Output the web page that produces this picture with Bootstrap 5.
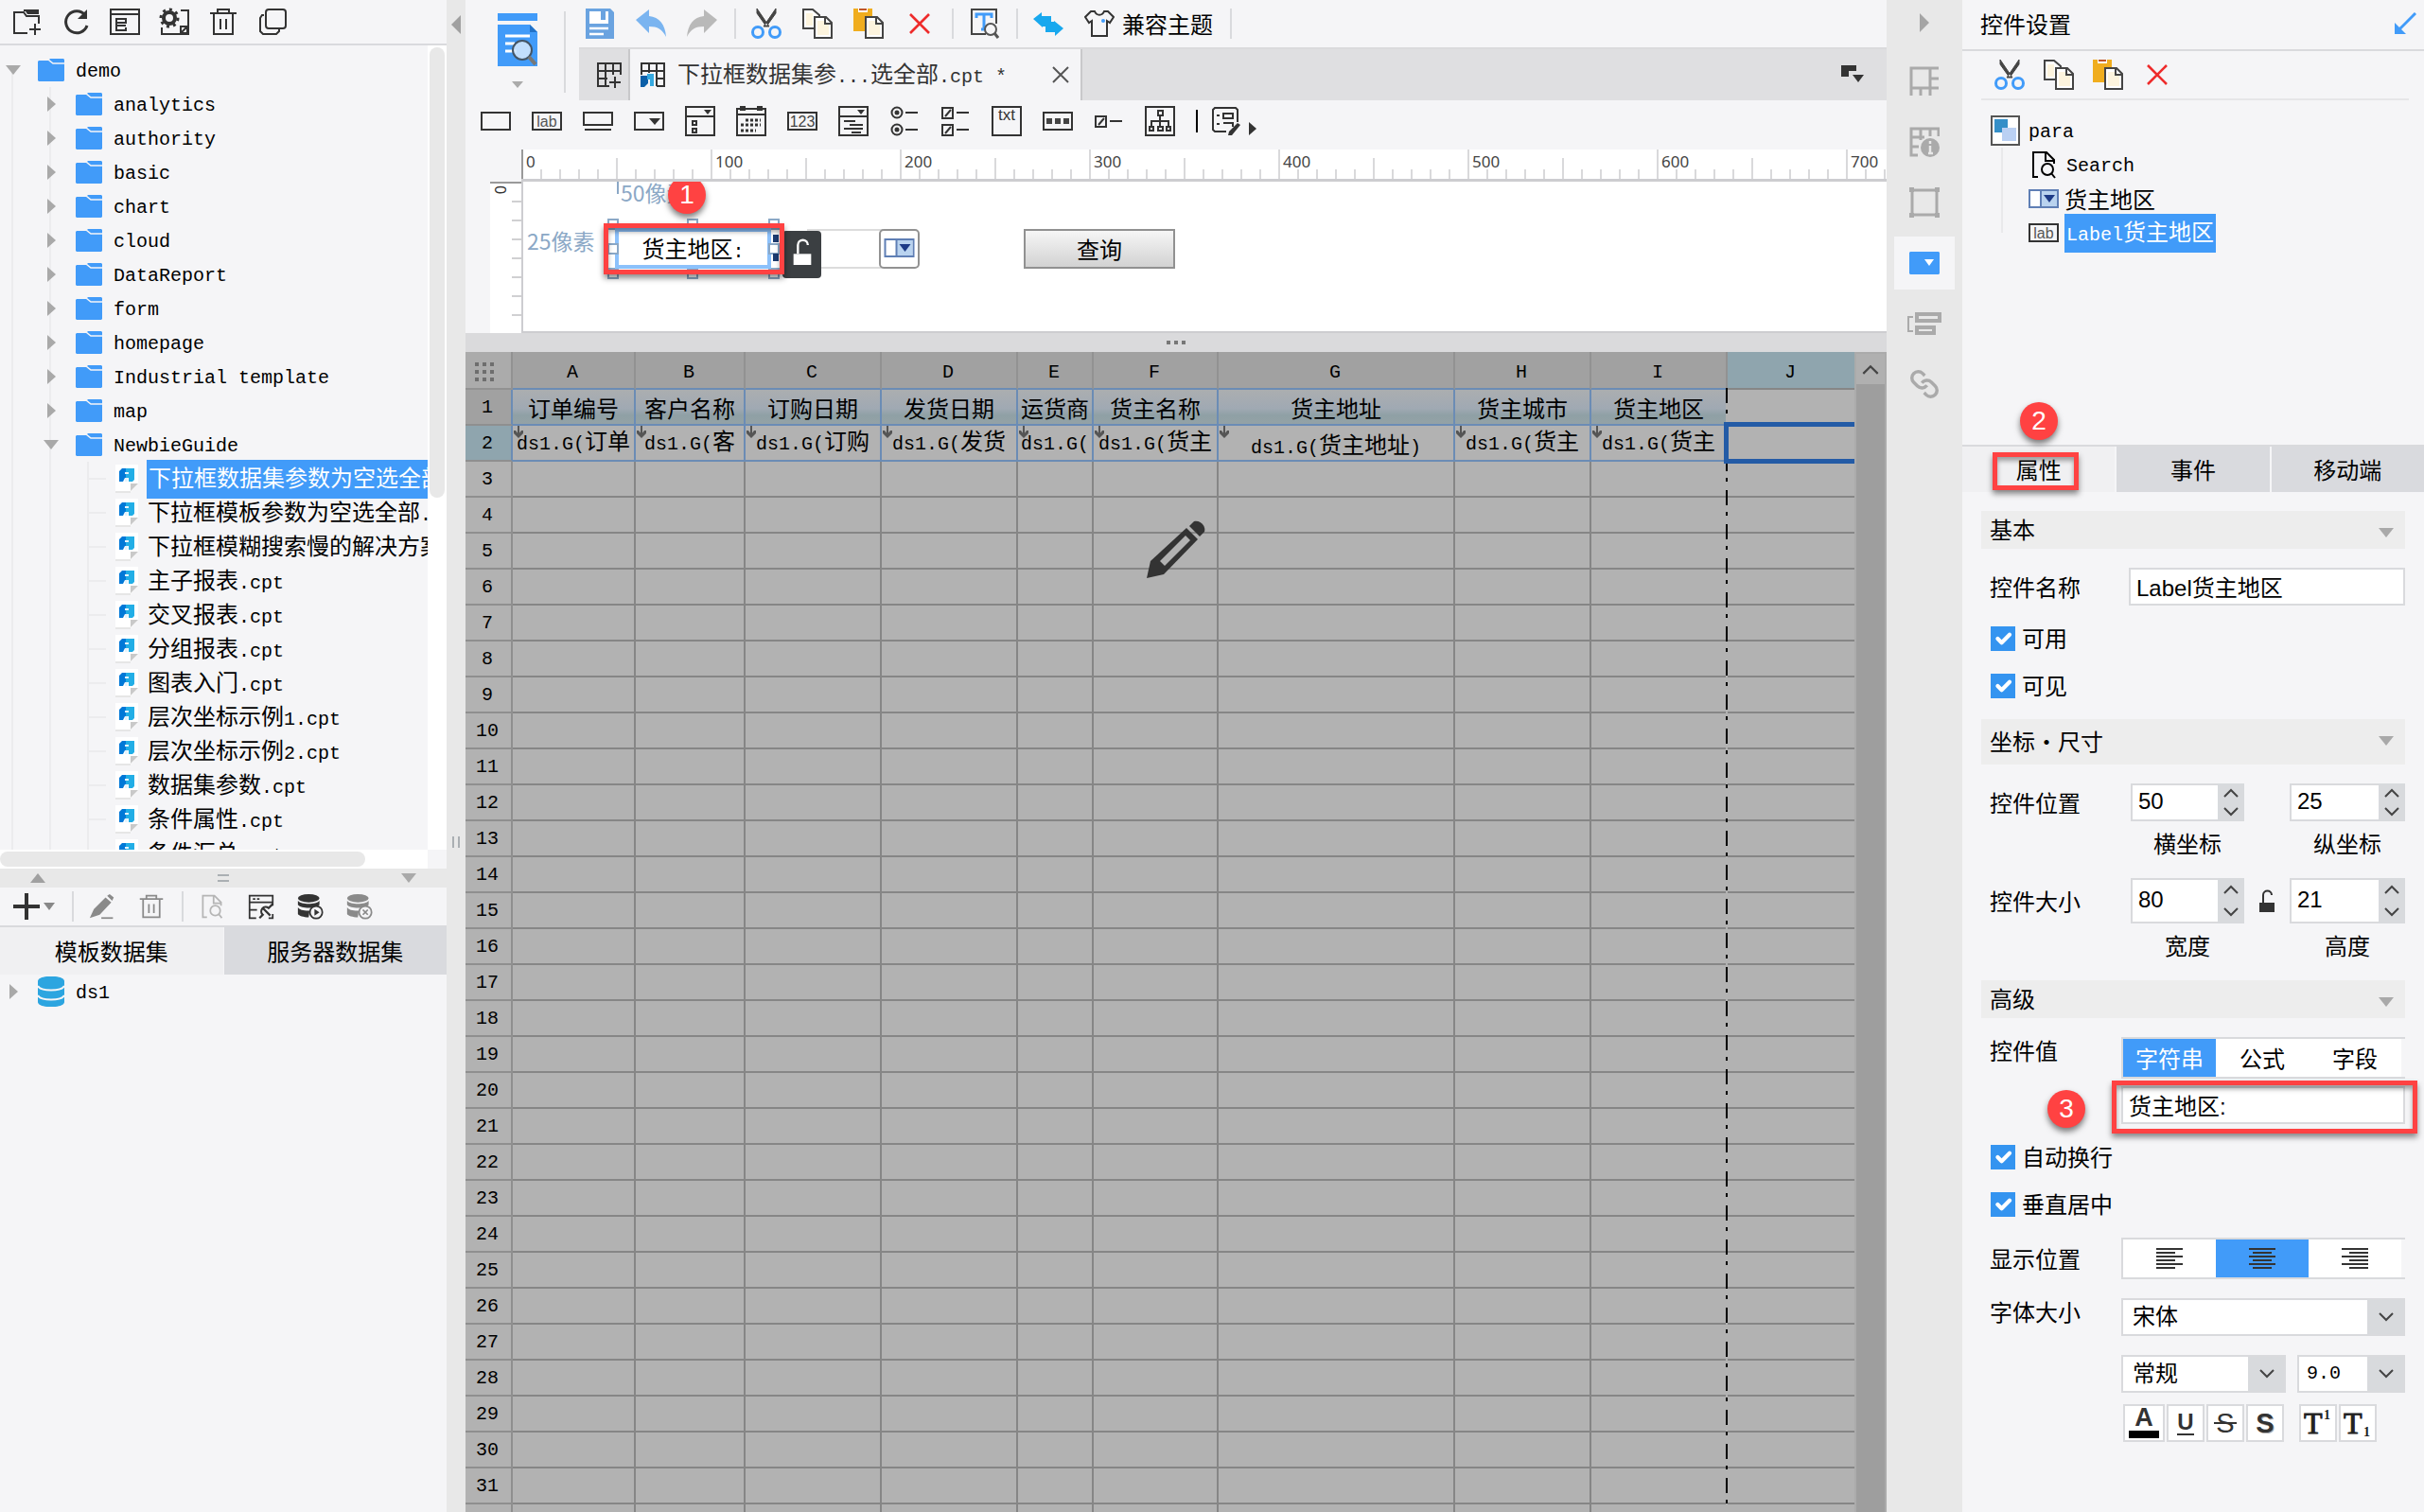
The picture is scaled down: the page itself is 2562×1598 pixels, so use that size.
<!DOCTYPE html>
<html lang="zh-CN">
<head>
<meta charset="utf-8">
<meta name="viewport" content="width=device-width, initial-scale=1">
<title>报表设计器</title>
<link href="https://cdn.jsdelivr.net/npm/bootstrap@5.3.0/dist/css/bootstrap.min.css" rel="stylesheet">
<style>
:root{--panel:#f5f5f7;--rail:#e8e8e8;--line:#d9dadd;--blue:#419bf9;--alert:#ff4242}
body{font-family:"Noto Sans CJK SC",sans-serif;font-size:24px;line-height:36px;color:#000;background:var(--panel)}
svg{display:block;flex:none}
.ic{width:32px;height:32px}
.ic28{width:28px;height:28px}
.mn{font-family:"Liberation Mono","Noto Sans CJK SC",monospace;font-size:20px}
.tool{border:0;padding:0;background:none;color:#000;display:flex;align-items:center;flex:none;line-height:32px}
.vsep{width:2px;background:var(--line);flex:none}
.rail-bg{background:var(--rail)}
.caret-d,.caret-u,.caret-r,.caret-l{width:0;height:0;flex:none;border:8px solid transparent}
.caret-d{border-top:10px solid #a9a9a9;border-bottom:0}
.caret-u{border-bottom:10px solid #a0a0a0;border-top:0}
.caret-r{border-left:9px solid #a9a9a9;border-right:0}
.caret-l{border-right:10px solid #a0a0a0;border-left:0;border-top-width:10px;border-bottom-width:10px}

/* left column */
.side-l{flex:0 0 472px;min-width:0}
.side-l>*{flex:none}
.side-l .bar{height:48px;border-bottom:2px solid var(--line);padding:0 12px;gap:20px}
.tree-box{height:870px}
.tree-view{padding-top:8px;min-width:0;flex:1 1 0}
.tree,.tree ul{list-style:none;margin:0;padding:0;background:linear-gradient(#ececee,#ececee) no-repeat 12px 18px/2px 100%}
.tree ul{background-position:52px 0}
.tree ul ul{background-position:92px 0}
.node{height:36px;display:flex;align-items:center;white-space:nowrap;color:#000;text-decoration:none}
.node>*,.node::before{flex:none}
.node>.mn{padding-top:3px}
.node .tg{width:32px;display:flex;justify-content:center;padding-right:4px;margin-right:8px}
.node svg{margin-right:12px}
.lv1{padding-left:40px}
.lv2{padding-left:94px}
.lv2::before{content:"";width:18px;height:2px;background:#ececee;margin-right:10px}
.lv2 svg{margin-right:10px}
.node .picked{background:var(--blue);color:#fff;padding:0 2px;margin-left:-1px}
.vscroll{flex:0 0 20px;background:#fff;padding:2px 2px 0}
.vscroll i,.hscroll i{display:block;background:#e8e8e8;border-radius:8px}
.vscroll i{height:476px}
.hscroll{height:20px;padding:2px 0;flex:1;background:#fff}
.hscroll i{width:386px;height:16px}
.split-h{height:20px}
.bar2{height:42px;border-bottom:2px solid var(--line);padding-left:14px}
.bar2 .tool{margin-right:24px}
.bar2 .vsep{height:32px;margin:0 16px 0 -6px}
.tabs2 button{height:50px;border:0;background:#d9dade;color:#000;flex:1 1 0;padding:0}
.tabs2 button.on{background:#f0f0f2}
.split-v{flex:0 0 20px}

/* centre */
main{min-width:0}
main>*{flex:none}
.preview{width:104px;padding:14px 0 0 6px}
.mainbar{height:50px;padding-left:6px}
.mainbar .tool{margin-right:22px}
.mainbar .vsep{height:32px;margin:0 16px 0 -4px}
.doctabs{height:56px;background:#dfdfe1;border-top:2px solid #dadadc}
.doctab{width:480px;background:var(--panel);border:solid #c8c8ca;border-width:0 2px;color:#333;padding:0 12px 0 10px}
.widgets{height:52px;padding:0 16px 8px;gap:22px}
.ruler-x{height:34px;background:repeating-linear-gradient(90deg,#d9d9db 0 2px,transparent 2px 20px) 0 100%/100% 10px no-repeat,repeating-linear-gradient(90deg,#d9d9db 0 2px,transparent 2px 100px) 0 100%/100% 22px no-repeat,#fff;border-bottom:3px solid #cdcdd0;margin-left:59px}
.ruler-x span{flex:0 0 200px;border-left:2px solid #d9d9db;padding-left:3px;font:17px/26px "Noto Sans",sans-serif;color:#444}
.ruler-x span:first-child{border-color:#9a9a9a}
.ruler-x span:last-child{flex-basis:42px}
.ruler-y{flex:0 0 33px;background:repeating-linear-gradient(180deg,transparent 0 18px,#d0d0d2 18px 20px) 100% 0/10px 100% no-repeat,#fff;border-top:2px solid #9a9a9a;font:16px/16px "Noto Sans",sans-serif;color:#333;writing-mode:vertical-rl;padding:2px 14px 0 0}
.canvas{height:160px;background:#fff;border-left:2px solid #cdcdd0;border-bottom:2px solid #cdcdd0}
.canvas>*{position:absolute}
.hint{color:#8ba8c6;white-space:nowrap;line-height:26px;font-size:23px}
.pick-box{left:97px;top:49px;width:165px;height:43px;border:4px solid #8cc1fb;background:#fff;line-height:33px;text-align:center}
.grip{width:12px;height:12px;border:2px solid #8ba8c6;background:#fff}
.callout{position:absolute;border:5px solid var(--alert);box-shadow:0 4px 6px rgba(0,0,0,.45),inset 0 4px 5px rgba(0,0,0,.35);pointer-events:none}
.num{position:absolute;width:40px;height:40px;border-radius:50%;background:var(--alert);color:#fff;text-align:center;font:28px/40px "Liberation Sans",sans-serif;box-shadow:0 4px 6px rgba(0,0,0,.5);z-index:3}
.query{left:529px;top:50px;width:160px;height:42px;border:2px solid #919191;background:linear-gradient(#f6f6f6,#d2d2d2);padding:0;line-height:34px;color:#000}
.split-mid{height:20px;background:#dadadc}
.dots{width:20px;height:4px;background:repeating-linear-gradient(90deg,#777 0 4px,transparent 4px 8px)}

/* spreadsheet */
.sheet{background:#b2b2b2;flex:1 1 0;min-height:0}
.grid{table-layout:fixed;width:100%;border-collapse:separate;border-spacing:0;line-height:30px}
.grid th,.grid td{height:38px;padding:0;border:solid #868686;border-width:0 2px 2px 0;text-align:center;overflow:hidden;font-weight:400}
.grid tr>:last-child{border-right:0}
.grid tr>th{padding:2px 2px 0 0}
.grid thead th{height:40px;padding-top:6px;background:#a1a1a1;border-right-color:#929292;border-bottom-color:#6b8cb5}
.grid thead th:first-child{background:#ababab;border-color:#929292}
.grid thead th.cur,.grid th.cur{background:#8fa5ae}
.grid thead th.cur{border-bottom-color:#868686}
.grid tbody th{border-color:#8f8f8f}
.grid .titles th{background:#a1a1a1;border-right-color:#6b8cb5}
.grid .titles td{background:linear-gradient(#abaeb0,#a0a9b3 55%,#8fa0a5 75%,#94a2a6);border-color:#6b8cb5}
.grid .bound th{border-right-color:#6b8cb5}
.grid .bound td{border-color:#6b8cb5}
.grid .titles td:last-child{background:none;border-color:#868686}
.cell{position:relative;height:36px;overflow:hidden;word-break:break-all;line-break:anywhere}
.cell svg{position:absolute;left:0;top:0}
.cell.mid{line-height:38px}
.brk{position:absolute;left:1332px;top:38px;bottom:0;width:2px;background:repeating-linear-gradient(#000 0 16px,#b2b2b2 16px 23px,#000 23px 27px,#b2b2b2 27px 36px)}
.cursor{position:absolute;left:1330px;right:0;top:74px;height:44px;border:5px solid #235ba6;border-right:0}
.pen{position:absolute;left:720px;top:178px}
.sheet-scroll{flex:0 0 34px;background:#9e9e9e;border:2px solid #ababab;border-bottom:0}
.sheet-scroll button{height:32px;width:100%;border:0;background:#b0b0b0;padding:0 0 0 6px}

/* right rail */
.rail{flex:0 0 80px;padding-top:8px}
.rail button{width:64px;height:56px;border:0;padding:0;background:none;margin-bottom:8px;display:flex;align-items:center;justify-content:center}
.rail button.on{background:var(--panel)}
.rail .fold{height:32px;margin-bottom:10px}

/* right column */
.side-r{flex:0 0 488px;min-width:0}
.side-r .head{height:54px;border-bottom:2px solid var(--line);padding:0 8px 2px 19px}
.wbar{height:52px;border-bottom:2px solid #e6e6e8;margin:0 16px 0 20px;padding-left:14px;gap:20px}
.wtree{height:364px;padding:14px 0 0 30px}
.wtree .node svg{margin-right:8px}
.wtree .kids{margin-left:11px;padding-left:29px;background:linear-gradient(#e9e9eb,#e9e9eb) no-repeat 0 0/2px 90px}
.wtree .kids .picked,.wtree .kids .plain{margin-left:-2px}
.proptabs{border-top:2px solid var(--line);gap:2px}
.proptabs button{position:relative;flex:1 1 0;height:48px;border:0;padding:0;background:#d9dade;color:#000}
.proptabs button.on{background:#f0f0f2}
.props{padding:20px 20px 0}
.sect{height:40px;background:#ededed;padding:0 12px 2px 9px;margin-bottom:20px}
.sect.tall{height:48px}
.prow{display:flex;align-items:center}
.prow>*{min-width:0}
.prow>.lb{padding-left:9px;flex:0 0 148px;line-height:28px}
.prow>.lb.w{flex-basis:156px}
.prow>.lb.x{flex-basis:158px}
.box{border:2px solid var(--line);border-radius:0;background-color:#fff;height:40px;color:#000;font-size:24px;line-height:28px;padding:0 6px 2px;min-width:0;font-family:"Liberation Sans","Noto Sans CJK SC",sans-serif}
input.grow{flex:1 1 0;width:0}
.ckrow{height:50px;display:flex;align-items:center;padding:0 0 0 10px;margin:0;min-height:0}
.ckrow .form-check-input{width:26px;height:26px;margin:0 7px 0 0;float:none;border-radius:0;border:0;background-color:#3494f0;background-size:28px}
.ckrow label{line-height:32px;padding-bottom:2px}
.spin{display:flex;height:40px}
.spin.tall,.spin.tall input{height:48px}
.spin input{flex:1 1 0;width:0;border-right:0;appearance:textfield}
.spin input::-webkit-inner-spin-button{display:none}
.spin div{width:28px;background:#d8dadd;display:flex;flex-direction:column}
.spin button{flex:1;border:0;background:none;padding:0;display:flex;align-items:center;justify-content:center}
.s1{flex:0 0 120px}.gap48{flex:0 0 48px}.s2{flex:1 1 0}
.cap{height:48px;margin-bottom:12px;padding-bottom:2px}
.seg{flex:1;display:flex;height:44px;border:solid var(--line);border-width:2px 0 2px 2px;padding-right:4px}
.seg button{flex:1 1 0;border:0;padding:0;background:#fff;color:#000;display:flex;align-items:center;justify-content:center}
.seg button.on{background:var(--blue);color:#fff}
.pickl{appearance:none;padding:0 44px 0 10px;background:url("data:image/svg+xml,%3Csvg xmlns='http://www.w3.org/2000/svg' width='40' height='40'%3E%3Cpath d='M0 0h40v40H0z' fill='%23d8dadd'/%3E%3Cpath d='M13 16l7 7 7-7' fill='none' stroke='%23444' stroke-width='2'/%3E%3C/svg%3E") no-repeat right -2px center #fff}
.pickl.mn{font-family:"Liberation Mono",monospace;font-size:20px;padding-left:8px}
.fx button{width:40px;height:40px;border:2px solid var(--line);background:#fff;padding:0;display:flex;align-items:center;justify-content:center}
.fx button:first-child{width:44px}
</style>
</head>
<body class="d-flex vh-100 overflow-hidden">

<svg width="0" height="0" class="position-absolute" aria-hidden="true">
<defs>
<symbol id="folder" viewBox="0 0 28 24"><path d="M0 3l1-1h10l2-2h14l1 1v22l-1 1H1l-1-1z" fill="#419bf9"/><path d="M11 1l5 4h12" fill="none" stroke="#f5f5f7" stroke-width="1.6"/></symbol>
<symbol id="cpt" viewBox="0 0 24 30"><path d="M0 0h24v20l-8 9H0z" fill="#fff"/><path d="M0 28h16v2H0z" fill="#e6e6e6"/><path d="M16 20h8l-8 8z" fill="#c9c9c9"/><path d="M4 7l3-3h6v14h-3v-4l-2 4H4z" fill="#0078d7"/><path d="M11 4h9v12l-2 2h-4v-4h-3z" fill="#22aee6"/><path d="M10 8h4v2h-4zM10 14h3v4h-3z" fill="#e4f3fc"/></symbol>
<symbol id="newf" viewBox="0 0 32 32"><g fill="none" stroke="#333" stroke-width="2"><path d="M17 28H3V6h10l3 4h13v8M13 4h15v4M25 18v12M19 24h12"/></g><path d="M15 5h13v3H17z" fill="#333"/></symbol>
<symbol id="refresh" viewBox="0 0 32 32"><path d="M26 9A11.5 11.5 0 1 0 28 20" fill="none" stroke="#333" stroke-width="3"/><path d="M28 3v10H18z" fill="#333"/></symbol>
<symbol id="struct" viewBox="0 0 32 32"><g fill="none" stroke="#333" stroke-width="2"><path d="M1 3h30v26H1zM1 8h30M7 12v14M7 13h10v4H7M7 20h10M7 25h10v-3"/></g></symbol>
<symbol id="gearbox" viewBox="0 0 32 32"><g fill="none" stroke="#333"><circle cx="11" cy="12" r="6" stroke-width="4"/><circle cx="11" cy="12" r="9" stroke-width="3" stroke-dasharray="3 4"/><path d="M3 22v7h28V4h-8M31 10v10" stroke-width="2"/><path d="M23 21h7v7h-7zM23 28l7-7" stroke-width="2"/></g></symbol>
<symbol id="trash" viewBox="0 0 32 32"><g fill="none" stroke="currentColor" stroke-width="2"><path d="M2 7h28M10 6V3h12v3M6 8v21h20V8M13 13v11M19 13v11"/></g></symbol>
<symbol id="dup" viewBox="0 0 32 32"><g fill="none" stroke="#333" stroke-width="2"><rect x="9" y="3" width="21" height="20" rx="3"/><path d="M7 9H5l-2 3v14l3 3h14l3-3v-2"/></g></symbol>
<symbol id="pencil" viewBox="0 0 32 32"><path d="M1 30l5-11L20 5l7 6-14 15zM22 3l3-2 5 4-2 4z" fill="#8a8a8a"/><path d="M15 30h14" stroke="#8a8a8a" stroke-width="2"/></symbol>
<symbol id="docfind" viewBox="0 0 32 32"><g fill="none" stroke="currentColor" stroke-width="2"><path d="M10 29H5V3h14l8 8v4M18 3v9h9"/><circle cx="20" cy="21" r="6"/><path d="M24 25l4 5"/></g></symbol>
<symbol id="formset" viewBox="0 0 32 32"><g fill="none" stroke="#333" stroke-width="2"><path d="M10 30H2V3h28v12M2 11h28M2 20h9M30 25v5h-5M6 7h3M11 7h3"/><path d="M14 30l4-4a5 5 0 0 1 7-8l5-5M18 18l9 9" stroke-width="2.500"/></g></symbol>
<symbol id="dbrun" viewBox="0 0 32 32"><g fill="currentColor"><ellipse cx="14" cy="6" rx="13" ry="5"/><path d="M1 9c4 5 22 5 26 0v5c-4 5-22 5-26 0zM1 17c3 4 9 4 14 4l-1 8C8 29 2 27 1 25z"/></g><circle cx="23" cy="23" r="7.500" fill="#f5f5f7" stroke="currentColor" stroke-width="2"/></symbol>
<symbol id="dbicon" viewBox="0 0 28 32"><path d="M0 5c0-7 28-7 28 0v22c0 7-28 7-28 0z" fill="#2ca5e0"/><path d="M0 10c3 6 25 6 28 0M0 20c3 6 25 6 28 0" fill="none" stroke="#f5f5f7" stroke-width="2"/></symbol>
<symbol id="save" viewBox="0 0 32 32"><path d="M1 0h26l4 4v28H1z" fill="#6aa3e0"/><path d="M5 3h20v13H5z" fill="#fff"/><path d="M17 3h5v9h-5z" fill="#6aa3e0"/><path d="M5 21h20M5 27h15" stroke="#fff" stroke-width="2.500"/></symbol>
<symbol id="undo" viewBox="0 0 32 32"><path d="M0 12L14 1v7c11 1 17 9 18 22-4-8-9-11-18-11v7z" fill="#7ab4f0"/></symbol>
<symbol id="redo" viewBox="0 0 32 32"><path d="M32 12L18 1v7C7 9 1 17 0 30c4-8 9-11 18-11v7z" fill="#b9b9b9"/></symbol>
<symbol id="cut" viewBox="0 0 32 32"><path d="M6 0l13 19h-3L6 5zM26 0L13 19h3L26 5z" fill="#444" stroke="#444"/><g fill="none" stroke="#419bf9" stroke-width="3"><circle cx="7" cy="25" r="5.500"/><circle cx="25" cy="25" r="5.500"/></g></symbol>
<symbol id="copy" viewBox="0 0 32 32"><g fill="#fff" stroke="#444" stroke-width="2"><path d="M1 1h10l7 6v14H1z"/><path d="M4 5h7v13H4z" fill="#fdf4dd" stroke="none"/><path d="M13 9h12l6 6v16H13z"/><path d="M16 13h8l4 4v11H16z" fill="#fdf4dd" stroke="none"/><path d="M24 9v7h7" fill="none"/></g></symbol>
<symbol id="paste" viewBox="0 0 32 32"><path d="M0 0h20v24H0z" fill="#f0ad1e"/><path d="M5 0h10v4H5z" fill="#fff"/><path d="M6 0h8v2H6z" fill="#c0562a"/><path d="M13 9h12l6 6v16H13z" fill="#fff" stroke="#444" stroke-width="2"/><path d="M16 13h8l4 4v11H16z" fill="#fdf4dd"/><path d="M24 9v7h7" fill="none" stroke="#444" stroke-width="2"/></symbol>
<symbol id="del" viewBox="0 0 32 32"><path d="M6 6l20 20M26 6L6 26" stroke="#ee2b2b" stroke-width="2.600"/></symbol>
<symbol id="tfind" viewBox="0 0 32 32"><path d="M18 27H3V1h26v15" fill="none" stroke="#444" stroke-width="2"/><path d="M8 10V6h16v4M16 6v16M13 22h6" fill="none" stroke="#419bf9" stroke-width="3"/><circle cx="23" cy="22" r="6" fill="#f5f5f7" stroke="#555" stroke-width="2"/><path d="M27 26l4 5" stroke="#555" stroke-width="3"/></symbol>
<symbol id="swap" viewBox="0 0 32 32"><path d="M0 11l9-7v4h10v6h3v-1l10 8-9 8v-4H13v-6h-3v1z" fill="#18a8ee"/></symbol>
<symbol id="shirt" viewBox="0 0 32 32"><path d="M11 3c2 5 8 5 10 0h4l6 6-4 6-3-2v16H8V13l-3 2-4-6 6-6z" fill="none" stroke="#333" stroke-width="2"/><circle cx="20" cy="13" r="2" fill="#419bf9"/></symbol>
<symbol id="gridadd" viewBox="0 0 28 28"><path d="M14 26H2V2h24v12M10 2v24M18 2v12M2 10h24M2 18h10M20 16v12M14 22h12" fill="none" stroke="#333" stroke-width="2"/></symbol>
<symbol id="gridcpt" viewBox="0 0 28 28"><path d="M2 14V2h24v24h-8M10 2v10M18 2v24M2 10h24M18 18h8" fill="none" stroke="#333" stroke-width="2"/><path d="M1 15h8v8l-4 4H1z" fill="#0b5fa8"/><path d="M8 13h7v13h-4v-7H8z" fill="#35a9e0"/></symbol>
<symbol id="w1" viewBox="0 0 32 32"><path d="M1 7h30v18H1z" fill="none" stroke="#333" stroke-width="2"/></symbol>
<symbol id="w2" viewBox="0 0 32 32"><path d="M1 7h30v18H1z" fill="none" stroke="#333" stroke-width="2"/><text x="16" y="22" font-size="16" text-anchor="middle" fill="#555" font-family="Liberation Sans,sans-serif">lab</text></symbol>
<symbol id="w3" viewBox="0 0 32 32"><path d="M1 7h30v13H1zM2 25h28" fill="none" stroke="#333" stroke-width="2"/></symbol>
<symbol id="w4" viewBox="0 0 32 32"><path d="M1 7h30v18H1z" fill="none" stroke="#333" stroke-width="2"/><path d="M16 13h12l-6 7z" fill="#333"/></symbol>
<symbol id="w5" viewBox="0 0 32 32"><path d="M1 1h30v30H1zM1 11h30M8 16h4v4H8zM8 24h4v4H8z" fill="none" stroke="#333" stroke-width="2"/><path d="M20 4h8l-4 5z" fill="#333"/></symbol>
<symbol id="w6" viewBox="0 0 32 32"><path d="M1 3h30v28H1zM1 9h30" fill="none" stroke="#333" stroke-width="2"/><path d="M4 0h6v5H4zM22 0h6v5h-6z" fill="#333"/><path d="M10 15h16M5 20h21M5 26h16" stroke="#333" stroke-width="3" stroke-dasharray="3 2"/></symbol>
<symbol id="w7" viewBox="0 0 32 32"><path d="M1 7h30v18H1z" fill="none" stroke="#333" stroke-width="2"/><text x="16" y="22" font-size="16" text-anchor="middle" fill="#444" font-family="Liberation Sans,sans-serif">123</text></symbol>
<symbol id="w8" viewBox="0 0 32 32"><path d="M1 1h30v30H1zM1 11h30M6 16h12M12 20h14M6 24h20M14 28h10" fill="none" stroke="#333" stroke-width="2"/><path d="M20 4h8l-4 5z" fill="#333"/></symbol>
<symbol id="w9" viewBox="0 0 32 32"><g fill="none" stroke="#333" stroke-width="2"><circle cx="8" cy="7" r="5.500"/><circle cx="8" cy="25" r="5.500"/><path d="M17 7h13M17 25h13"/></g><g fill="#333"><circle cx="8" cy="7" r="2.500"/><circle cx="8" cy="25" r="2.500"/></g></symbol>
<symbol id="w10" viewBox="0 0 32 32"><path d="M2 2h11v11H2zM2 20h11v11H2zM17 7h13M17 25h13M5 11l6-7M5 29l6-7" fill="none" stroke="#333" stroke-width="2"/></symbol>
<symbol id="w11" viewBox="0 0 32 32"><path d="M1 1h30v30H1z" fill="none" stroke="#333" stroke-width="2"/><text x="16" y="15" font-size="17" text-anchor="middle" fill="#333" font-family="Liberation Sans,sans-serif">txt</text></symbol>
<symbol id="w12" viewBox="0 0 32 32"><path d="M1 7h30v18H1z" fill="none" stroke="#333" stroke-width="2"/><path d="M4 13h6v6H4zM13 13h6v6h-6zM22 13h6v6h-6z" fill="#444"/></symbol>
<symbol id="w13" viewBox="0 0 32 32"><path d="M2 11h11v11H2zM17 16h13M5 20l6-7" fill="none" stroke="#333" stroke-width="2"/></symbol>
<symbol id="w14" viewBox="0 0 32 32"><path d="M1 1h30v30H1zM14 5h5v5h-5zM16 10v12M7 22v-6h18v6M5 22h4v4H5zM14 22h5v4h-5zM23 22h4v4h-4z" fill="none" stroke="#333" stroke-width="2"/></symbol>
<symbol id="w15" viewBox="0 0 32 32"><path d="M16 27H4l-2-2V4l2-2h22l2 2v13M13 8h10v5H13zM13 18h10v4M6 10h3M6 19h3" fill="none" stroke="#333" stroke-width="2"/><path d="M28 18l3 2-9 11h-4l1-4z" fill="#333"/></symbol>
<symbol id="combo" viewBox="0 0 32 20"><path d="M1 1h30v18H1z" fill="#fff" stroke="#5f7fb5" stroke-width="2"/><path d="M13 2h17v16H13z" fill="#b9d3ef"/><path d="M13 1v18" stroke="#5f7fb5" stroke-width="2"/><path d="M16 6h12l-6 8z" fill="#1d3b87"/></symbol>
<symbol id="unlock" viewBox="0 0 16 24"><path d="M0 14h16v10H0z" fill="currentColor"/><path d="M4 14V6c0-6 9-6 9 0" fill="none" stroke="currentColor" stroke-width="2"/></symbol>
<symbol id="down" viewBox="0 0 12 14"><path d="M6 0v10" stroke="#555" stroke-width="2"/><path d="M1 5h2l3 4 3-4h2v3l-5 5-5-5z" fill="#555"/></symbol>
<symbol id="r1" viewBox="0 0 32 32"><path d="M31 2H2v29M2 23h29M22 2v21M22 13h9M12 23v8M22 23v8" fill="none" stroke="#aaa" stroke-width="3"/></symbol>
<symbol id="r2" viewBox="0 0 32 32"><path d="M31 10V2H2v28h7M2 11h14M2 21h8M12 2v12M22 2v8" fill="none" stroke="#aaa" stroke-width="3"/><circle cx="22" cy="22" r="10" fill="#aaa"/><path d="M22 15v3M22 20v8M20 28h5" stroke="#e8e8e8" stroke-width="2.500"/></symbol>
<symbol id="r3" viewBox="0 0 32 32"><path d="M3 3h26v26H3z" fill="none" stroke="#aaa" stroke-width="3"/><path d="M0 0h5v5H0zM27 0h5v5h-5zM0 27h5v5H0zM27 27h5v5h-5z" fill="#aaa"/></symbol>
<symbol id="r4" viewBox="0 0 32 24"><path d="M0 1l1-1h30l1 1v22l-1 1H1l-1-1z" fill="#419bf9"/><path d="M16 8h10l-5 7z" fill="#fff"/></symbol>
<symbol id="r5" viewBox="0 0 36 24"><path d="M6 5H1v15h5" fill="none" stroke="#aaa" stroke-width="2"/><path d="M10 2h24v7H10zM10 16h18v6H10z" fill="none" stroke="#aaa" stroke-width="4"/></symbol>
<symbol id="r6" viewBox="0 0 24 24"><g fill="none" stroke="#aaa" stroke-width="2.600" transform="matrix(-1 0 0 1 24 0)"><path d="M10 13a5 5 0 0 0 7.540.540l3-3a5 5 0 0 0-7.070-7.070l-1.720 1.710"/><path d="M14 11a5 5 0 0 0-7.540-.540l-3 3a5 5 0 0 0 7.070 7.070l1.710-1.710"/></g></symbol>
<symbol id="up" viewBox="0 0 16 10"><path d="M1 9l7-7 7 7" fill="none" stroke="#444" stroke-width="2"/></symbol>
<symbol id="dn" viewBox="0 0 16 10"><path d="M1 1l7 7 7-7" fill="none" stroke="#444" stroke-width="2"/></symbol>
</defs>
</svg>

<!-- file tree and data sets -->
<aside class="side-l d-flex flex-column">
  <div class="bar d-flex align-items-center">
    <button class="tool" aria-label="新建文件夹"><svg class="ic"><use href="#newf"/></svg></button>
    <button class="tool" aria-label="刷新"><svg class="ic"><use href="#refresh"/></svg></button>
    <button class="tool" aria-label="结构"><svg class="ic"><use href="#struct"/></svg></button>
    <button class="tool" aria-label="设置"><svg class="ic"><use href="#gearbox"/></svg></button>
    <button class="tool" aria-label="删除" style="color:#333"><svg class="ic"><use href="#trash"/></svg></button>
    <button class="tool" aria-label="复制"><svg class="ic"><use href="#dup"/></svg></button>
  </div>
  <div class="tree-box d-flex flex-column">
    <div class="d-flex flex-fill overflow-hidden">
      <div class="tree-view overflow-hidden">
        <ul class="tree" id="tree">
          <li><a class="node lv0" href="#"><span class="tg"><i class="caret-d"></i></span><svg width="28" height="24"><use href="#folder"/></svg><span class="mn">demo</span></a>
            <ul id="folders"></ul>
          </li>
        </ul>
      </div>
      <div class="vscroll"><i></i></div>
    </div>
    <div class="d-flex"><div class="hscroll"><i></i></div><div style="width:20px"></div></div>
  </div>
  <div class="split-h rail-bg d-flex align-items-center justify-content-between px-4">
    <i class="caret-u ms-2"></i>
    <span class="d-flex flex-column gap-1"><i class="bg-secondary opacity-50" style="width:12px;height:2px"></i><i class="bg-secondary opacity-50" style="width:12px;height:2px"></i></span>
    <i class="caret-d me-2"></i>
  </div>
  <div class="bar2 d-flex align-items-center">
    <button class="tool gap-1" aria-label="添加"><svg class="ic28" viewBox="0 0 28 28"><path d="M14 0v28M0 14h28" stroke="#333" stroke-width="4"/></svg><svg width="12" height="8"><path d="M0 0h12L6 8z" fill="#888"/></svg></button>
    <i class="vsep"></i>
    <button class="tool" aria-label="编辑"><svg class="ic28"><use href="#pencil"/></svg></button>
    <button class="tool" aria-label="删除" style="color:#8a8a8a"><svg class="ic28"><use href="#trash"/></svg></button>
    <i class="vsep"></i>
    <button class="tool" aria-label="预览" style="color:#b5b5b5"><svg class="ic28"><use href="#docfind"/></svg></button>
    <button class="tool" aria-label="连接"><svg class="ic28"><use href="#formset"/></svg></button>
    <button class="tool" aria-label="执行" style="color:#333"><svg class="ic28" viewBox="0 0 32 32"><use href="#dbrun" width="32" height="32"/><path d="M21 19l6 4-6 4z" fill="#333"/></svg></button>
    <button class="tool" aria-label="清除" style="color:#8a8a8a"><svg class="ic28" viewBox="0 0 32 32"><use href="#dbrun" width="32" height="32"/><path d="M20 20l6 6M26 20l-6 6" stroke="#8a8a8a" stroke-width="2"/></svg></button>
  </div>
  <div class="tabs2 d-flex" style="gap:1px"><button class="on">模板数据集</button><button>服务器数据集</button></div>
  <a class="node lv0" href="#"><span class="tg"><i class="caret-r"></i></span><svg width="28" height="32"><use href="#dbicon"/></svg><span class="mn">ds1</span></a>
</aside>

<div class="split-v rail-bg d-flex flex-column align-items-center justify-content-between">
  <i class="caret-l mt-3"></i>
  <span class="d-flex gap-1" style="margin-bottom:-146px"><i class="bg-secondary opacity-50" style="width:2px;height:12px"></i><i class="bg-secondary opacity-50" style="width:2px;height:12px"></i></span>
  <i></i>
</div>

<!-- designer -->
<main class="flex-fill d-flex flex-column overflow-hidden">
  <div class="d-flex">
    <div class="preview d-flex flex-column align-items-center">
      <button class="tool flex-column gap-3" aria-label="预览"><svg width="42" height="56" viewBox="0 0 42 56"><path d="M0 0h42v8H0zM0 12h34l8 8v36H0z" fill="#419bf9"/><path d="M34 12l8 8h-8z" fill="#2272c8"/><path d="M8 24h26M8 32h10M8 40h12" stroke="#fff" stroke-width="3"/><circle cx="26" cy="39" r="10" fill="#cfe6fd" fill-opacity=".9" stroke="#456" stroke-width="2"/><path d="M33 46l7 8" stroke="#777" stroke-width="4"/></svg><svg width="12" height="7"><path d="M0 0h12L6 7z" fill="#aaa"/></svg></button>
    </div>
    <div class="vsep" style="height:86px;margin:12px 14px 0 0"></div>
    <div class="flex-fill">
      <div class="mainbar d-flex align-items-center">
        <button class="tool" aria-label="保存"><svg class="ic"><use href="#save"/></svg></button>
        <button class="tool" aria-label="撤销"><svg class="ic"><use href="#undo"/></svg></button>
        <button class="tool" aria-label="重做"><svg class="ic"><use href="#redo"/></svg></button>
        <i class="vsep"></i>
        <button class="tool" aria-label="剪切"><svg class="ic"><use href="#cut"/></svg></button>
        <button class="tool" aria-label="复制"><svg class="ic"><use href="#copy"/></svg></button>
        <button class="tool" aria-label="粘贴"><svg class="ic"><use href="#paste"/></svg></button>
        <button class="tool" aria-label="删除"><svg class="ic"><use href="#del"/></svg></button>
        <i class="vsep"></i>
        <button class="tool" aria-label="查找"><svg class="ic"><use href="#tfind"/></svg></button>
        <i class="vsep"></i>
        <button class="tool" aria-label="替换"><svg class="ic"><use href="#swap"/></svg></button>
        <button class="tool gap-2"><svg class="ic"><use href="#shirt"/></svg>兼容主题</button>
        <i class="vsep"></i>
      </div>
      <div class="doctabs d-flex">
        <button class="tool justify-content-center" style="width:52px;padding-left:12px" aria-label="新建"><svg class="ic28"><use href="#gridadd"/></svg></button>
        <div class="doctab d-flex align-items-center gap-3">
          <svg class="ic28"><use href="#gridcpt"/></svg>
          <span class="text-nowrap" style="margin-left:-4px">下拉框数据集参<span class="mn">...</span>选全部<span class="mn">.cpt *</span></span>
          <button class="tool ms-auto" aria-label="关闭"><svg width="18" height="18"><path d="M1 1l16 16M17 1L1 17" stroke="#555" stroke-width="2"/></svg></button>
        </div>
        <button class="tool ms-auto me-4" aria-label="窗口列表"><svg width="24" height="24"><path d="M0 2h16v6h-8v6H0z" fill="#333"/><path d="M12 12h12l-6 8z" fill="#333"/></svg></button>
      </div>
    </div>
  </div>

  <div class="widgets d-flex align-items-center" id="widgets">
  </div>

  <div class="ruler-x d-flex overflow-hidden"><span>0</span><span>100</span><span>200</span><span>300</span><span>400</span><span>500</span><span>600</span><span>700</span></div>
  <div class="d-flex" style="padding-left:26px">
    <div class="ruler-y">0</div>
    <div class="canvas flex-fill position-relative overflow-hidden">
      <span class="hint" style="left:99px;top:-2px;border-left:2px solid;padding-left:2px;height:15px">50像素</span>
      <span class="hint" style="left:0;top:49px;padding-left:4px">25像素</span>
      <i class="grip" style="left:89px;top:39px"></i><i class="grip" style="left:173px;top:39px"></i><i class="grip" style="left:259px;top:39px"></i>
      <i class="grip" style="left:89px;top:91px"></i><i class="grip" style="left:173px;top:91px"></i><i class="grip" style="left:259px;top:91px"></i>
      <div class="pick-box">货主地区<span class="mn">:</span></div>
      <i class="grip" style="left:89px;top:65px"></i><i class="grip" style="left:259px;top:65px"></i>
      <i style="left:264px;top:56px;width:6px;height:8px;background:#1d3b70"></i><i style="left:264px;top:76px;width:6px;height:8px;background:#1d3b70"></i>
      <input aria-label="货主地区" style="left:300px;top:50px;width:80px;height:42px;border:2px solid #dcdcdc">
      <button style="left:376px;top:50px;width:43px;height:42px;border:2px solid #929292;border-radius:5px;background:#fff;padding:0 0 2px 3px" aria-label="展开"><svg width="33" height="20"><use href="#combo"/></svg></button>
      <div class="d-flex justify-content-center text-white" style="left:274px;top:52px;width:41px;height:50px;background:#3b3f42;border-radius:4px;padding-top:8px"><svg width="20" height="28"><use href="#unlock"/></svg></div>
      <div class="callout" style="left:85px;top:44px;width:191px;height:54px"></div>
      <div class="num" style="left:153px;top:-6px">1</div>
      <button class="query">查询</button>
    </div>
  </div>
  <div class="split-mid d-flex align-items-center justify-content-center"><i class="dots"></i></div>

  <div class="sheet d-flex overflow-hidden">
    <div class="flex-fill position-relative overflow-hidden">
      <table class="grid">
        <colgroup><col style="width:50px"><col style="width:130px"><col style="width:116px"><col style="width:144px"><col style="width:144px"><col style="width:80px"><col style="width:132px"><col style="width:250px"><col style="width:144px"><col style="width:144px"><col></colgroup>
        <thead><tr class="mn"><th><svg width="20" height="22" style="margin-left:10px"><g fill="#6e6e6e"><path d="M0 0h4v4H0zM8 0h4v4H8zM16 0h4v4h-4zM0 8h4v4H0zM8 8h4v4H8zM16 8h4v4h-4zM0 16h4v4H0zM8 16h4v4H8zM16 16h4v4h-4z"/></g></svg></th><th>A</th><th>B</th><th>C</th><th>D</th><th>E</th><th>F</th><th>G</th><th>H</th><th>I</th><th class="cur">J</th></tr></thead>
        <tbody id="rows"></tbody>
      </table>
      <div class="brk"></div>
      <div class="cursor"></div>
      <svg class="pen" width="62" height="62" viewBox="0 0 62 62"><path d="M45 6l5-5c6-2 13 5 11 11l-5 5z" fill="#333"/><path d="M0 61l4-18L42 8l12 12L18 57z" fill="#333"/><path d="M14 43L41 16l5 5-27 27z" fill="#b2b2b2"/></svg>
    </div>
    <div class="sheet-scroll"><button aria-label="向上滚动"><svg width="18" height="11"><use href="#up"/></svg></button></div>
  </div>
</main>

<nav class="rail rail-bg d-flex flex-column align-items-center">
  <button class="fold" aria-label="收起"><svg width="10" height="20"><path d="M0 0l10 10L0 20z" fill="#a5a5a5"/></svg></button>
  <button class="mt-2" aria-label="单元格元素"><svg class="ic"><use href="#r1"/></svg></button>
  <button aria-label="单元格属性"><svg class="ic"><use href="#r2"/></svg></button>
  <button aria-label="悬浮元素"><svg class="ic"><use href="#r3"/></svg></button>
  <button class="on" aria-label="控件设置"><svg width="32" height="24"><use href="#r4"/></svg></button>
  <button aria-label="条件属性"><svg width="36" height="24"><use href="#r5"/></svg></button>
  <button aria-label="超级链接"><svg class="ic"><use href="#r6"/></svg></button>
</nav>

<!-- widget settings -->
<aside class="side-r d-flex flex-column">
  <div class="head d-flex align-items-center justify-content-between">控件设置
    <button class="tool" aria-label="弹出"><svg width="24" height="24"><path d="M23 1L5 19" stroke="#419bf9" stroke-width="3"/><path d="M1 11v12h12z" fill="#419bf9"/></svg></button></div>
  <div class="wbar d-flex align-items-center">
    <button class="tool" aria-label="剪切"><svg class="ic"><use href="#cut"/></svg></button>
    <button class="tool" aria-label="复制"><svg class="ic"><use href="#copy"/></svg></button>
    <button class="tool" aria-label="粘贴"><svg class="ic"><use href="#paste"/></svg></button>
    <button class="tool" aria-label="删除"><svg class="ic"><use href="#del"/></svg></button>
  </div>
  <div class="wtree">
    <a class="node" href="#"><svg width="32" height="32" viewBox="0 0 32 32"><path d="M1 1h29v30H1z" fill="#fff" stroke="#555" stroke-width="2"/><path d="M4 4h14v14H4z" fill="#358fc8"/><path d="M12 13h15v14H12z" fill="#bad0f3"/></svg><span class="mn">para</span></a>
    <div class="kids">
      <a class="node" href="#"><svg class="ic"><use href="#docfind"/></svg><span class="mn">Search</span></a>
      <a class="node" href="#"><svg width="32" height="20"><use href="#combo"/></svg><span class="plain">货主地区</span></a>
      <a class="node" href="#"><svg class="ic"><use href="#w2"/></svg><span class="picked"><span class="mn">Label</span>货主地区</span></a>
    </div>
  </div>
  <div class="proptabs d-flex">
    <button class="on">属性<span class="callout" style="inset:6px 38px 2px 32px"></span><span class="num" style="left:61px;top:-47px">2</span></button><button>事件</button><button>移动端</button>
  </div>
  <form class="props" onsubmit="return false">
    <div class="sect d-flex align-items-center justify-content-between">基本<i class="caret-d mt-2"></i></div>
    <div class="prow"><label class="lb w" for="wn">控件名称</label><input id="wn" class="box grow" value="Label货主地区"></div>
    <div style="height:10px"></div>
    <div class="ckrow form-check"><input class="form-check-input" type="checkbox" id="c1" checked><label for="c1">可用</label></div>
    <div class="ckrow form-check"><input class="form-check-input" type="checkbox" id="c2" checked><label for="c2">可见</label></div>
    <div style="height:10px"></div>
    <div class="sect tall d-flex align-items-center justify-content-between">坐标・尺寸<i class="caret-d"></i></div>
    <div class="prow"><span class="lb x">控件位置</span>
      <div class="spin s1"><input id="px" class="box" type="number" value="50"><div><button type="button" aria-label="增加"><svg width="16" height="10"><use href="#up"/></svg></button><button type="button" aria-label="减少"><svg width="16" height="10"><use href="#dn"/></svg></button></div></div>
      <span class="gap48"></span>
      <div class="spin s2"><input id="py" class="box" type="number" value="25"><div><button type="button" aria-label="增加"><svg width="16" height="10"><use href="#up"/></svg></button><button type="button" aria-label="减少"><svg width="16" height="10"><use href="#dn"/></svg></button></div></div>
    </div>
    <div class="prow cap"><span class="lb x"></span><label class="s1 text-center" for="px">横坐标</label><span class="gap48"></span><label class="s2 text-center" for="py">纵坐标</label></div>
    <div class="prow"><span class="lb x">控件大小</span>
      <div class="spin tall s1"><input id="sw" class="box" type="number" value="80"><div><button type="button" aria-label="增加"><svg width="16" height="10"><use href="#up"/></svg></button><button type="button" aria-label="减少"><svg width="16" height="10"><use href="#dn"/></svg></button></div></div>
      <span class="gap48 d-flex justify-content-center"><svg width="16" height="24" style="color:#333"><use href="#unlock"/></svg></span>
      <div class="spin tall s2"><input id="sh" class="box" type="number" value="21"><div><button type="button" aria-label="增加"><svg width="16" height="10"><use href="#up"/></svg></button><button type="button" aria-label="减少"><svg width="16" height="10"><use href="#dn"/></svg></button></div></div>
    </div>
    <div class="prow cap"><span class="lb x"></span><label class="s1 text-center" for="sw">宽度</label><span class="gap48"></span><label class="s2 text-center" for="sh">高度</label></div>
    <div class="sect d-flex align-items-center justify-content-between">高级<i class="caret-d mt-2"></i></div>
    <div class="prow align-items-start"><label class="lb" for="val">控件值</label><div class="seg"><button type="button" class="on">字符串</button><button type="button">公式</button><button type="button">字段</button></div></div>
    <div class="prow mt-2"><span class="lb"></span><div class="flex-fill d-flex position-relative"><input id="val" class="box grow" value="货主地区:"><span class="callout" style="inset:-6px -13px -10px -10px"></span><span class="num" style="left:-78px;top:4px">3</span></div></div>
    <div style="height:10px"></div>
    <div class="ckrow form-check"><input class="form-check-input" type="checkbox" id="c3" checked><label for="c3">自动换行</label></div>
    <div class="ckrow form-check"><input class="form-check-input" type="checkbox" id="c4" checked><label for="c4">垂直居中</label></div>
    <div style="height:10px"></div>
    <div class="prow" style="margin-bottom:20px"><span class="lb">显示位置</span><div class="seg">
      <button type="button" aria-label="左对齐"><svg width="28" height="22"><path d="M0 1h28M0 5h20M0 9h28M0 13h20M0 17h28M0 21h20" stroke="#333" stroke-width="2"/></svg></button>
      <button type="button" class="on" aria-label="居中"><svg width="28" height="22"><path d="M0 1h28M4 5h20M0 9h28M4 13h20M0 17h28M4 21h20" stroke="#333" stroke-width="2"/></svg></button>
      <button type="button" aria-label="右对齐"><svg width="28" height="22"><path d="M0 1h28M8 5h20M0 9h28M8 13h20M0 17h28M8 21h20" stroke="#333" stroke-width="2"/></svg></button></div></div>
    <div class="prow align-items-start" style="margin-bottom:20px"><label class="lb" for="ff">字体大小</label><select id="ff" class="box pickl flex-fill"><option>宋体</option></select></div>
    <div class="prow" style="margin-bottom:12px"><span class="lb"></span><select aria-label="字形" class="box pickl" style="width:174px;margin-right:12px"><option>常规</option></select><select aria-label="字号" class="box pickl mn flex-fill"><option>9.0</option></select></div>
    <div class="prow"><span class="lb"></span><div class="fx d-flex" style="gap:2px;padding-left:2px">
      <button type="button" aria-label="颜色"><svg width="32" height="34"><text x="16" y="20" text-anchor="middle" font-size="27" font-weight="700" font-family="Liberation Sans,sans-serif" fill="#333">A</text><path d="M0 25h32v8H0z"/></svg></button>
      <button type="button" aria-label="下划线"><svg width="20" height="28"><text x="10" y="21" text-anchor="middle" font-size="24" font-weight="700" font-family="Liberation Sans,sans-serif" fill="#333">U</text><path d="M1 26h18" stroke="#333" stroke-width="2"/></svg></button>
      <button type="button" aria-label="删除线"><svg width="24" height="28"><text x="12" y="24" text-anchor="middle" font-size="29" font-family="Liberation Sans,sans-serif" fill="#333">S</text><path d="M0 14h24" stroke="#333" stroke-width="2"/></svg></button>
      <button type="button" aria-label="阴影"><svg width="24" height="28"><text x="13" y="25" text-anchor="middle" font-size="29" font-weight="700" font-family="Liberation Sans,sans-serif" fill="#aaa">S</text><text x="12" y="24" text-anchor="middle" font-size="29" font-weight="700" font-family="Liberation Sans,sans-serif" fill="#333">S</text></svg></button>
      <span style="width:12px"></span>
      <button type="button" aria-label="上标"><svg width="32" height="30"><text x="1" y="26" font-size="32" font-family="Liberation Serif,serif" fill="#222" stroke="#222">T</text><text x="22" y="11" font-size="14" font-weight="700" font-family="Liberation Serif,serif" fill="#222">1</text></svg></button>
      <button type="button" aria-label="下标"><svg width="32" height="30"><text x="1" y="26" font-size="32" font-family="Liberation Serif,serif" fill="#222" stroke="#222">T</text><text x="22" y="29" font-size="14" font-weight="700" font-family="Liberation Serif,serif" fill="#222">1</text></svg></button>
    </div></div>
  </form>
</aside>

<script src="https://cdn.jsdelivr.net/npm/bootstrap@5.3.0/dist/js/bootstrap.bundle.min.js"></script>
<script>
// Latin runs use the monospaced face, Chinese runs the sans face
const mix = s => s.replace(/[\x20-\x7e]+/g, m => `<span class="mn">${m}</span>`);

const folders = ['analytics','authority','basic','chart','cloud','DataReport','form','homepage','Industrial template','map','NewbieGuide'];
const files = ['下拉框数据集参数为空选全部.cpt','下拉框模板参数为空选全部.cpt','下拉框模糊搜索慢的解决方案.cpt','主子报表.cpt','交叉报表.cpt','分组报表.cpt','图表入门.cpt','层次坐标示例1.cpt','层次坐标示例2.cpt','数据集参数.cpt','条件属性.cpt','条件汇总.cpt'];
const fileList = files.map((f, i) => `<li><a class="node lv2" href="#"><svg width="24" height="30"><use href="#cpt"/></svg><span class="${i ? '' : 'picked'}">${mix(f)}</span></a></li>`).join('');
document.getElementById('folders').innerHTML = folders.map((f, i) => {
  const open = i === folders.length - 1;
  return `<li><a class="node lv1" href="#"><span class="tg"><i class="caret-${open ? 'd' : 'r'}"></i></span><svg width="28" height="24"><use href="#folder"/></svg>${mix(f)}</a>${open ? `<ul>${fileList}</ul>` : ''}</li>`;
}).join('');

const names = ['按钮','标签','文本框','下拉框','下拉复选框','日期','数字','下拉树','单选组','复选组','文本域','密码','复选框','视图树'];
document.getElementById('widgets').innerHTML = names.map((n, i) => `<button class="tool" aria-label="${n}"><svg class="ic"><use href="#w${i + 1}"/></svg></button>`).join('')
  + '<i style="width:2px;height:24px;background:#000"></i><button class="tool gap-2" style="margin-left:-8px" aria-label="更多"><svg class="ic"><use href="#w15"/></svg><svg width="8" height="30"><path d="M0 16l8 7-8 7z" fill="#333"/></svg></button>';

const titles = ['订单编号','客户名称','订购日期','发货日期','运货商','货主名称','货主地址','货主城市','货主地区'];
const row = (cls, n, cells, hc = '') => `<tr class="${cls}"><th class="mn ${hc}">${n}</th>${cells}<td></td></tr>`;
let html = row('titles', 1, titles.map(t => `<td><div class="cell mid">${t}</div></td>`).join(''));
html += row('bound', 2, titles.map(t => `<td><div class="cell ${t === '货主地址' ? 'mid' : ''}"><svg width="12" height="14"><use href="#down"/></svg>${mix('ds1.G(' + t + ')')}</div></td>`).join(''), 'cur');
for (let n = 3; n <= 32; n++) html += row('', n, '<td></td>'.repeat(9));
document.getElementById('rows').innerHTML = html;
</script>
</body>
</html>
